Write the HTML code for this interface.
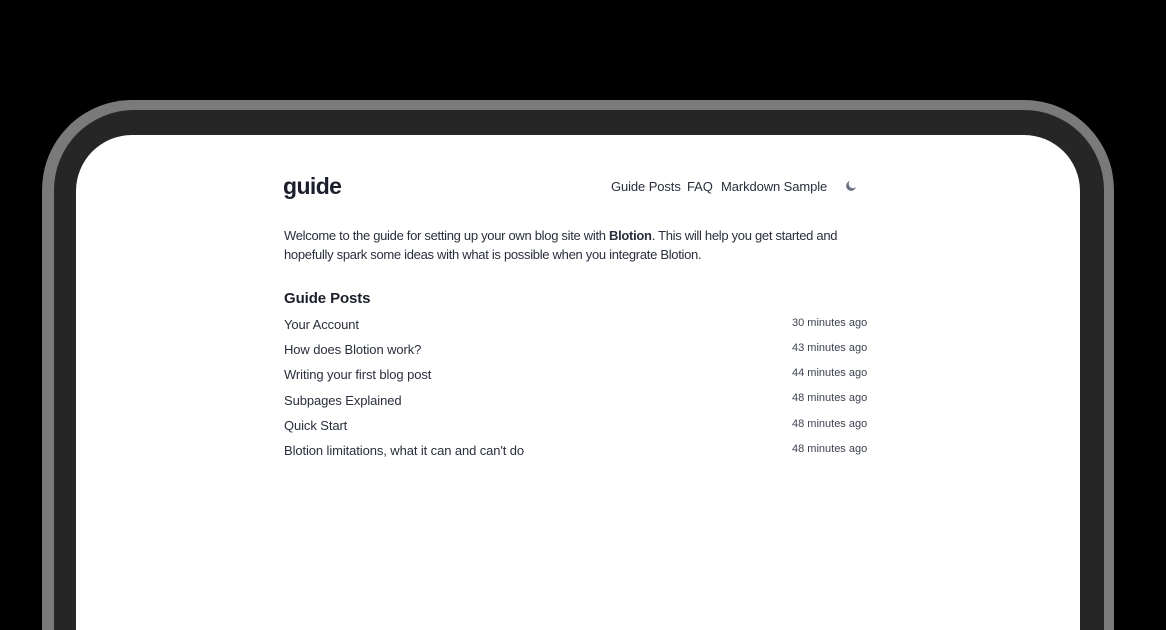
<!DOCTYPE html>
<html><head><meta charset="utf-8"><style>
html,body{margin:0;padding:0;background:#000;width:1166px;height:630px;overflow:hidden;position:relative;font-family:"Liberation Sans",sans-serif;color:#1f2433}
.s1{position:absolute;left:42px;top:100px;width:1072px;height:530px;border-radius:90px 90px 0 0;background:#7a7a7a}
.s2{position:absolute;left:54px;top:110px;width:1050px;height:520px;border-radius:80px 80px 0 0;background:#262626}
.card{position:absolute;left:76px;top:135px;width:1004px;height:495px;border-radius:56px 56px 0 0;background:#fff}
.t{position:absolute;white-space:nowrap;font-size:13px;color:#2a2f3d;letter-spacing:-0.1px}
.r{position:absolute;white-space:nowrap;font-size:11px;color:#3d4250;left:792px}
</style></head><body>
<div class="s1"></div><div class="s2"></div><div class="card"></div>
<div class="t" style="left:283px;top:173px;font-size:23px;font-weight:bold;color:#1c1f2b;letter-spacing:-0.6px">guide</div>
<div class="t" style="left:611px;top:179px">Guide Posts</div>
<div class="t" style="left:687px;top:179px">FAQ</div>
<div class="t" style="left:721px;top:179px">Markdown Sample</div>
<svg style="position:absolute;left:845px;top:180px" width="12" height="12" viewBox="0 0 12 12"><path d="M5 1A5 5 0 1 0 11 7 4 4 0 0 1 5 1Z" fill="#6b7280"/></svg>
<div class="t" style="left:284px;top:228px;letter-spacing:-0.3px">Welcome to the guide for setting up your own blog site with <b>Blotion</b>. This will help you get started and</div>
<div class="t" style="left:284px;top:247px;letter-spacing:-0.3px">hopefully spark some ideas with what is possible when you integrate Blotion.</div>
<div class="t" style="left:284px;top:290px;font-size:15px;font-weight:bold;color:#1c1f2b">Guide Posts</div>
<div class="t" style="left:284px;top:317px">Your Account</div>
<div class="t" style="left:284px;top:342px">How does Blotion work?</div>
<div class="t" style="left:284px;top:367px">Writing your first blog post</div>
<div class="t" style="left:284px;top:393px">Subpages Explained</div>
<div class="t" style="left:284px;top:418px">Quick Start</div>
<div class="t" style="left:284px;top:443px">Blotion limitations, what it can and can't do</div>
<div class="r" style="top:317px">30 minutes ago</div>
<div class="r" style="top:342px">43 minutes ago</div>
<div class="r" style="top:367px">44 minutes ago</div>
<div class="r" style="top:392px">48 minutes ago</div>
<div class="r" style="top:418px">48 minutes ago</div>
<div class="r" style="top:443px">48 minutes ago</div>
</body></html>
